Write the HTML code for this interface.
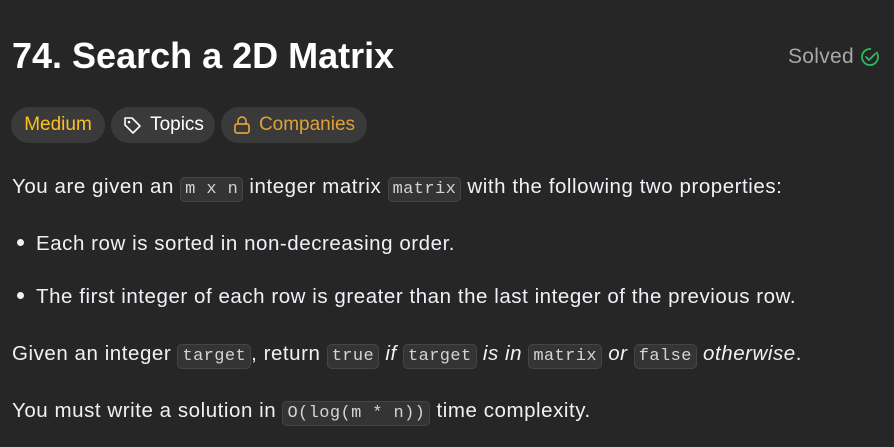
<!DOCTYPE html>
<html><head><style>
body{margin:0;background:#262626;width:894px;height:447px;overflow:hidden;font-family:"Liberation Sans","DejaVu Sans",sans-serif;color:#eff1f6;}
.t{position:absolute;left:12px;top:35px;font-size:36px;font-weight:bold;color:#fff;letter-spacing:0px}
.s{position:absolute;right:14px;top:45px;font-size:21px;color:#a8a8a8;display:flex;align-items:center;gap:6px;letter-spacing:.3px}
.p{position:absolute;top:107px;height:36px;border-radius:18px;background:#3a3a3a;font-size:19px;display:flex;align-items:center;justify-content:center;gap:8px}
.l{position:absolute;left:12px;font-size:20.5px;letter-spacing:.55px;white-space:nowrap;color:#eff1f6}
code{font-family:"Liberation Mono","DejaVu Sans Mono",monospace;font-size:17px;letter-spacing:.4px;background:#343434;border:1px solid #454545;border-radius:5px;padding:2px 4px;color:#d4d4d4}
i{font-style:italic}
.b{display:inline-block;width:7px;height:7px;border-radius:50%;background:#eff1f6;margin:0 12px 4px 5px;vertical-align:middle}
</style></head><body>
<div class="t">74. Search a 2D Matrix</div>
<div class="s">Solved <svg width="20" height="20" viewBox="0 0 20 20"><circle cx="10" cy="10" r="8" fill="none" stroke="#2cbb5d" stroke-width="1.8" stroke-dasharray="44 7" transform="rotate(-40 10 10)"/><path d="M6 10l3 3 6-6" fill="none" stroke="#2cbb5d" stroke-width="1.8" stroke-linecap="round" stroke-linejoin="round"/></svg></div>
<div class="p" style="left:11px;width:94px;color:#ffc01e">Medium</div>
<div class="p" style="left:111px;width:104px;color:#fff"><svg width="20" height="20" viewBox="0 0 20 20"><path d="M3 3h7l8 8-7 7-8-8z" fill="none" stroke="#fff" stroke-width="1.6" stroke-linejoin="round"/><circle cx="7" cy="7" r="1.3" fill="#fff"/></svg>Topics</div>
<div class="p" style="left:221px;width:146px;color:#e0a138"><svg width="18" height="20" viewBox="0 0 18 20"><rect x="2" y="9" width="14" height="9" rx="2" fill="none" stroke="#e0a138" stroke-width="1.7"/><path d="M5 9V6a4 4 0 0 1 8 0v3" fill="none" stroke="#e0a138" stroke-width="1.7"/></svg>Companies</div>
<div class="l" style="top:175px">You are given an <code>m x n</code> integer matrix <code>matrix</code> with the following two properties:</div>
<div class="l" style="top:232px"><span class="b"></span>Each row is sorted in non-decreasing order.</div>
<div class="l" style="top:285px"><span class="b"></span>The first integer of each row is greater than the last integer of the previous row.</div>
<div class="l" style="top:342px">Given an integer <code>target</code>, return <code>true</code> <i>if</i> <code>target</code> <i>is in</i> <code>matrix</code> <i>or</i> <code>false</code> <i>otherwise</i>.</div>
<div class="l" style="top:399px">You must write a solution in <code>O(log(m * n))</code> time complexity.</div>
</body></html>
